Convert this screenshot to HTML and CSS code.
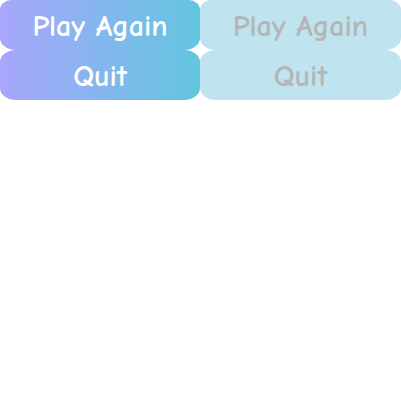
FILE: index.html
```html
<!DOCTYPE html>
<html>
<head>
<meta charset="utf-8">
<link rel="stylesheet" href="styles.css">
</head>
<body>
<div class="row">
  <div class="col col-active">
    <div class="btn">Play Again</div>
    <div class="btn">Quit</div>
  </div>
  <div class="col col-ghost">
    <div class="btn">Play Again</div>
    <div class="btn">Quit</div>
    <div class="guide"></div>
  </div>
</div>
</body>
</html>
```
FILE: styles.css
```css
html, body {
  margin: 0;
  padding: 0;
  background: #ffffff;
}
.row {
  display: flex;
  width: 401px;
}
.col {
  flex: 0 0 200px;
  display: flex;
  flex-direction: column;
  position: relative;
}
.col-ghost {
  flex: 0 0 201px;
}
.btn {
  height: 50px;
  display: flex;
  align-items: center;
  justify-content: center;
  padding-top: 3px;
  box-sizing: border-box;
  font-family: "Comic Sans MS", "Comic Neue", cursive;
  font-weight: bold;
  font-size: 30px;
  border-radius: 16px / 12px;
}
.btn:first-child {
  border-top-left-radius: 11px 10px;
  border-top-right-radius: 11px 10px;
}
.col-active .btn {
  color: #ffffff;
  background: linear-gradient(90deg, #a8a6fc 0%, #62c6e0 100%);
}
.col-ghost .btn {
  color: #b5b5b5;
  background: #bfe3ef;
}
.guide {
  position: absolute;
  left: 169px;
  top: 0;
  width: 1px;
  height: 100px;
  background: repeating-linear-gradient(180deg, #8fcbe2 0 1px, transparent 1px 10px);
}
```
